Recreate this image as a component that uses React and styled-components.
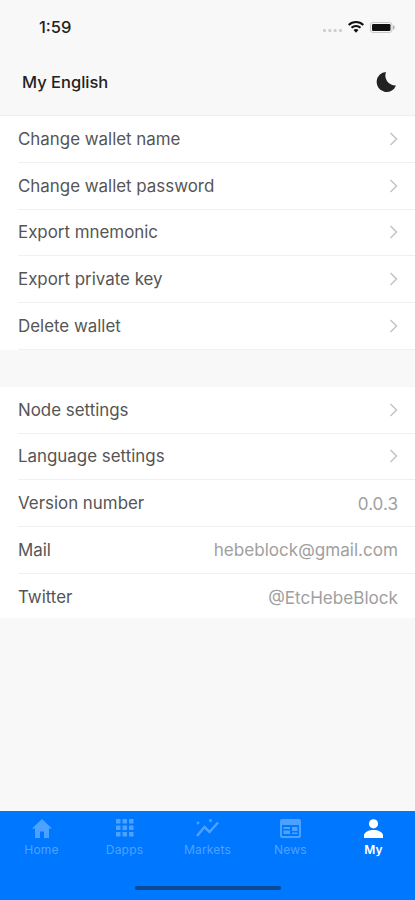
import React from 'react'
import styled, { createGlobalStyle } from 'styled-components'

const GlobalStyle = createGlobalStyle`
  html, body {
    margin: 0;
    padding: 0;
    background: #f8f8f8;
    font-family: Inter, "Liberation Sans", sans-serif;
  }
`

const Screen = styled.div`
  width: 415px;
  height: 900px;
  display: flex;
  flex-direction: column;
  background: #f8f8f8;
  overflow: hidden;
`

const StatusBar = styled.div`
  height: 54px;
  flex: none;
  display: flex;
  align-items: center;
  justify-content: space-between;
  padding: 0 20px 0 39px;
  box-sizing: border-box;
`

const Time = styled.span`
  font-size: 16.5px;
  font-weight: 500;
  color: #222;
`

const StatusIcons = styled.div`
  display: flex;
  align-items: center;
  gap: 6px;
`

const SignalDots = styled.svg`
  margin-top: 7px;
`

const Header = styled.div`
  height: 62px;
  flex: none;
  display: flex;
  align-items: center;
  justify-content: space-between;
  padding: 0 19px 6px 22px;
  box-sizing: border-box;
  border-bottom: 1px solid #f0f0f0;
`

const Title = styled.span`
  font-size: 16.5px;
  font-weight: 500;
  color: #222;
`

const List = styled.div`
  background: #fff;
  flex: none;
  margin-bottom: ${p => p.$gap || 0}px;
`

const Row = styled.div`
  height: ${p => (p.$last ? 44 : 46.75)}px;
  margin-left: 18px;
  padding-right: 17px;
  box-sizing: border-box;
  display: flex;
  align-items: ${p => (p.$last ? 'flex-start' : 'center')};
  padding-top: ${p => (p.$last ? 13 : 0)}px;
  justify-content: space-between;
  border-bottom: ${p => (p.$noLine ? 'none' : '1px solid #f0f0f0')};
`

const Label = styled.span`
  font-size: 16.9px;
  color: #555;
`

const Value = styled.span`
  font-size: 17.1px;
  color: #a0a0a0;
`

const Spacer = styled.div`
  flex: 1;
`

const TabBar = styled.div`
  height: 89px;
  flex: none;
  background: #0077ff;
  position: relative;
  display: flex;
  padding: 5px 0 0 0;
  box-sizing: border-box;
`

const Tab = styled.div`
  flex: 1;
  display: flex;
  flex-direction: column;
  align-items: center;
  gap: 2px;
  color: ${p => (p.$active ? '#ffffff' : '#4ea2ff')};
`

const TabIcon = styled.div`
  height: 24px;
  display: flex;
  align-items: center;
  justify-content: center;
`

const TabLabel = styled.span`
  font-size: 12px;
  font-weight: ${p => (p.$active ? 600 : 400)};
  letter-spacing: 0.2px;
`

const HomeIndicator = styled.div`
  position: absolute;
  left: 135px;
  bottom: 10px;
  width: 146px;
  height: 4px;
  border-radius: 2px;
  background: #0a4a94;
`

const Chevron = () => (
  <svg width="9" height="14" viewBox="0 0 9 14" fill="none" stroke="#c4c4c4" strokeWidth="1.5">
    <path d="M1.500 1 7.500 7l-6 6" />
  </svg>
)

const HomeIcon = () => (
  <svg width="20" height="19" viewBox="0 0 20 19" fill="currentColor">
    <path d="M10 0 0 9.500h3V19h5v-6.500h4V19h5V9.500h3z" />
  </svg>
)

const GridIcon = () => (
  <svg width="18" height="18" viewBox="0 0 18 18" fill="currentColor">
    {[0, 6.5, 13].flatMap(y =>
      [0, 6.5, 13].map(x => <rect key={`${x}-${y}`} x={x} y={y} width="4.500" height="4.500" rx="0.600" />)
    )}
  </svg>
)

const MarketsIcon = () => (
  <svg width="23" height="18" viewBox="0 0 23 18" fill="none" stroke="currentColor" strokeWidth="2.500">
    <path d="M1 17 8.500 8l5 5L22 3.500" />
    <circle cx="2" cy="4" r="1.400" fill="currentColor" stroke="none" />
    <circle cx="14.500" cy="1.500" r="1.500" fill="currentColor" stroke="none" />
  </svg>
)

const NewsIcon = () => (
  <svg width="21" height="19" viewBox="0 0 21 19" fill="currentColor">
    <path
      fillRule="evenodd"
      d="M2 0h17a2 2 0 0 1 2 2v15a2 2 0 0 1-2 2H2a2 2 0 0 1-2-2V2a2 2 0 0 1 2-2zm0 6v11h17V6zM3.500 8h6.500v2H3.500zm0 3.500h6.500V15H3.500zM12 8h5.500v4H12zm0 5.500h5.500V15H12z"
    />
  </svg>
)

const UserIcon = () => (
  <svg width="19" height="19" viewBox="0 0 19 19" fill="currentColor">
    <circle cx="9.500" cy="4.800" r="4.600" />
    <path d="M0 19v-2.500C0 13 5 11 9.500 11S19 13 19 16.500V19z" />
  </svg>
)

const MoonIcon = () => (
  <svg width="20" height="20" viewBox="0 0 20 20" fill="#222">
    <path d="M10 0A10 10 0 1 0 20 13.500 10 10 0 0 1 10 0z" />
  </svg>
)

const Wifi = () => (
  <svg width="16" height="12" viewBox="0 0 16 12" fill="#111">
    <path d="M8 0c3 0 5.800 1.200 8 3.200l-1.400 1.500A9.500 9.500 0 0 0 8 2a9.500 9.500 0 0 0-6.600 2.700L0 3.200A11.700 11.700 0 0 1 8 0z" />
    <path d="M8 4c2 0 3.800.8 5.200 2l-1.400 1.500A5.500 5.500 0 0 0 8 6a5.500 5.500 0 0 0-3.800 1.500L2.800 6A7.700 7.700 0 0 1 8 4z" />
    <path d="M8 8c1 0 1.800.4 2.500 1L8 11.800 5.500 9c.7-.6 1.500-1 2.500-1z" />
  </svg>
)

const Battery = () => (
  <svg width="25" height="11" viewBox="0 0 25 11">
    <rect x="0.500" y="0.500" width="21.500" height="10" rx="2.500" fill="none" stroke="#c8c8c8" />
    <rect x="2" y="2" width="18.500" height="7" rx="1.200" fill="#111" />
    <rect x="23" y="3.500" width="1.500" height="4" rx="0.700" fill="#b0b0b0" />
  </svg>
)

const Signal = () => (
  <SignalDots width="19" height="3" viewBox="0 0 19 3" fill="#cfcfcf">
    {[0, 5.3, 10.6, 16].map(x => <rect key={x} x={x} width="3" height="3" rx="1" />)}
  </SignalDots>
)

const walletRows = ['Change wallet name', 'Change wallet password', 'Export mnemonic', 'Export private key', 'Delete wallet']
const tabs = [
  { name: 'Home', Icon: HomeIcon },
  { name: 'Dapps', Icon: GridIcon },
  { name: 'Markets', Icon: MarketsIcon },
  { name: 'News', Icon: NewsIcon },
  { name: 'My', Icon: UserIcon, active: true },
]

const App = () => {
  return (
    <Screen>
      <GlobalStyle />
      <StatusBar>
        <Time>1:59</Time>
        <StatusIcons>
          <Signal />
          <Wifi />
          <Battery />
        </StatusIcons>
      </StatusBar>
      <Header>
        <Title>My English</Title>
        <MoonIcon />
      </Header>

      <List $gap={37}>
        {walletRows.map(name => (
          <Row key={name}>
            <Label>{name}</Label>
            <Chevron />
          </Row>
        ))}
      </List>

      <List>
        <Row><Label>Node settings</Label><Chevron /></Row>
        <Row><Label>Language settings</Label><Chevron /></Row>
        <Row><Label>Version number</Label><Value>0.0.3</Value></Row>
        <Row><Label>Mail</Label><Value>hebeblock@gmail.com</Value></Row>
        <Row $last $noLine><Label>Twitter</Label><Value>@EtcHebeBlock</Value></Row>
      </List>

      <Spacer />

      <TabBar>
        {tabs.map(({ name, Icon, active }) => (
          <Tab key={name} $active={active}>
            <TabIcon><Icon /></TabIcon>
            <TabLabel $active={active}>{name}</TabLabel>
          </Tab>
        ))}
        <HomeIndicator />
      </TabBar>
    </Screen>
  )
}

export default App
